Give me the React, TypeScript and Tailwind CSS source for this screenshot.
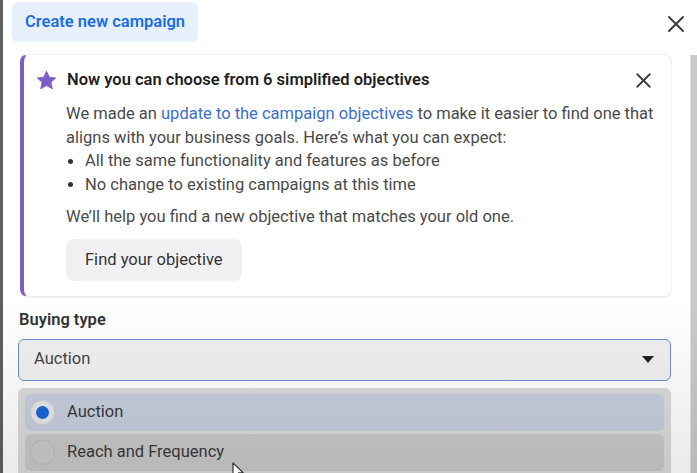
import { X } from 'lucide-react';

const bullets = ['All the same functionality and features as before', 'No change to existing campaigns at this time'];

function Star() {
  return (
    <svg viewBox="0 0 24 24" className="w-[21px] h-[21px] shrink-0 -ml-[1px]">
      <path d="M12 1.5l3.2 6.7 7.3.9-5.4 5 1.5 7.3L12 17.8l-6.6 3.6 1.5-7.3-5.4-5 7.3-.9z" fill="#7a5fc9" stroke="#7a5fc9" strokeWidth="1" strokeLinejoin="round" />
    </svg>
  );
}

function Cursor() {
  return (
    <svg viewBox="0 0 12 18" className="w-[12px] h-[18px]">
      <path d="M1 1v14l3.5-3.3 2.4 5.3 2-.9-2.4-5.2h4.8z" fill="#fff" stroke="#333" strokeWidth="1.2" strokeLinejoin="round" />
    </svg>
  );
}

export default function App() {
  return (
    <div className="relative w-[697px] h-[473px] overflow-hidden bg-white font-['Roboto',sans-serif]">
      <div className="absolute left-0 top-0 bottom-0 w-[3px] bg-[#5f5f5f]" />
      <div className="absolute right-0 top-[55px] bottom-0 w-[7px] bg-[#c9c9c9] border-l border-[#e0e0e0]" />

      <div className="flex items-start justify-between pl-[12px] pr-[7px] pt-[2px]">
        <div className="h-[40px] px-[13px] flex items-center rounded-md bg-[#e8f0fc] text-[#1a6fe0] text-[16.5px] font-semibold">
          Create new campaign
        </div>
        <X className="w-[28px] h-[28px] mt-[8px] text-[#3a3a3a]" strokeWidth={1.6} />
      </div>

      <div className="ml-[20px] mr-[25px] mt-[12px] h-[243px] rounded-lg border border-[#eeeef2] border-l-[4px] border-l-[#7a5fc0] shadow-[0_1px_2px_rgba(0,0,0,0.06)] pl-[13px] pr-[16px] pt-[13px]">
        <div className="flex items-center gap-[10px]">
          <Star />
          <div className="flex-1 text-[16.5px] font-semibold text-[#1f1f1f]">Now you can choose from 6 simplified objectives</div>
          <X className="w-[25px] h-[25px] -mr-[1px] text-[#3a3a3a]" strokeWidth={1.7} />
        </div>
        <div className="pl-[29px] mt-[9px] text-[16.5px] leading-[23.7px] text-[#4a4a4a]">
          <p>
            We made an <span className="text-[#3b6fc9]">update to the campaign objectives</span> to make it easier to find one that aligns with your business goals. Here’s what you can expect:
          </p>
          <ul>
            {bullets.map((b) => (
              <li key={b} className="flex items-center">
                <span className="w-[19px] pl-[2px] flex"><span className="w-[5px] h-[5px] rounded-full bg-[#333]" /></span>
                <span>{b}</span>
              </li>
            ))}
          </ul>
          <p className="mt-[8px]">We’ll help you find a new objective that matches your old one.</p>
          <button className="mt-[10px] h-[42px] px-[19px] rounded-lg bg-[#f1f1f3] text-[#333] text-[16.5px]">Find your objective</button>
        </div>
      </div>

      <div className="px-[18px] pr-[26px] mt-[11px]">
        <div className="text-[16.5px] font-semibold text-[#333] pl-[1px]">Buying type</div>
        <div className="mt-[6px] h-[42px] rounded-md border-[1.5px] border-[#6f8ed0] bg-[#f0f0f0] flex items-center justify-between pl-[15px] pr-[16px] text-[16.5px] text-[#444]">
          <span>Auction</span>
          <svg viewBox="0 0 12 7" className="w-[12px] h-[7px]"><path d="M0 0h12L6 7z" fill="#222" /></svg>
        </div>
        <div className="mt-[7px] rounded-md border border-[#d9d9d9] bg-[#dadada] px-[6px] pt-[5px] h-[100px]">
          <div className="h-[37px] rounded-md bg-[#c6cddc] flex items-center gap-[12px] pl-[5px] text-[16.5px] text-[#3a3a3a]">
            <span className="w-[25px] h-[25px] rounded-full bg-[#e6e6e6] border border-[#d0d0d0] flex items-center justify-center">
              <span className="w-[13px] h-[13px] rounded-full bg-[#1a66d6]" />
            </span>
            Auction
          </div>
          <div className="mt-[3px] h-[37px] rounded-md bg-[#c8c8c8] flex items-center gap-[12px] pl-[5px] text-[16.5px] text-[#3a3a3a]">
            <span className="w-[25px] h-[25px] rounded-full bg-[#cbcbcb] border border-[#bababa]" />
            Reach and Frequency
          </div>
        </div>
      </div>

      <div className="absolute inset-x-0 top-[300px] bottom-0 pointer-events-none bg-gradient-to-b from-transparent via-black/[0.04] to-black/[0.08]" />
      <div className="absolute left-[232px] top-[462px]"><Cursor /></div>
    </div>
  );
}
